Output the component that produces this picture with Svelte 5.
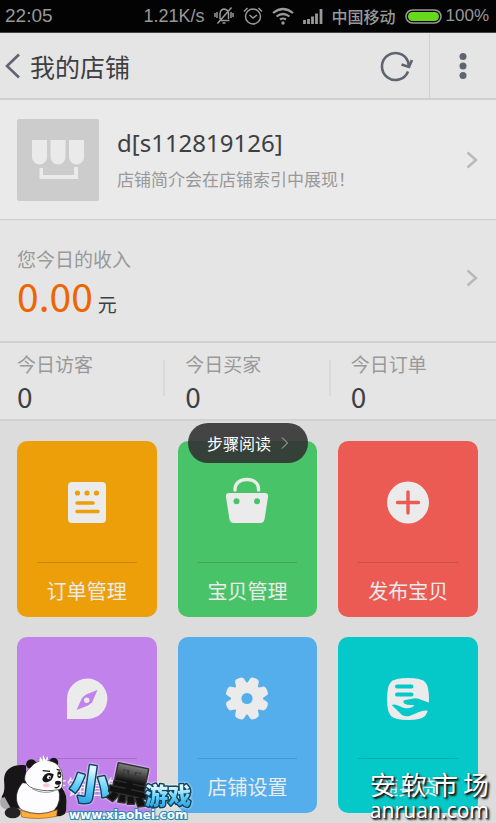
<script lang="ts">
	type Tile = {
		icon: string;
		label: string;
	};

	const stats = [
		{ label: '今日访客', value: 0 },
		{ label: '今日买家', value: 0 },
		{ label: '今日订单', value: 0 }
	];

	const tiles: Tile[] = [
		{ icon: 'orders', label: '订单管理' },
		{ icon: 'goods', label: '宝贝管理' },
		{ icon: 'publish', label: '发布宝贝' },
		{ icon: 'explore', label: '店铺营销' },
		{ icon: 'settings', label: '店铺设置' },
		{ icon: 'loan', label: '随身贷' }
	];

	const teeth = [22.5, 67.5, 112.5, 157.5, 202.5, 247.5, 292.5, 337.5];
	const market = ['安', '软', '市', '场'];
</script>

{#snippet chevron()}
	<svg class="chevron" viewBox="0 0 12 18" aria-hidden="true">
		<path d="M1.5 1.5 10 9l-8.500 7.500" />
	</svg>
{/snippet}

<div class="page">
	<div class="status">
		<span class="time">22:05</span>
		<span class="rate">1.21K/s</span>
		<svg width="20" height="18" viewBox="0 0 20 18" aria-hidden="true">
			<path d="M5 13.500h10.500M6 12V6.500Q6.500 2.500 10 2q4 .5 4.500 4.500V12M8.500 16h3M3.500 16.500 17.500.5M1 6v4M3 5v6M17 5v6M19 6v4" />
		</svg>
		<svg width="20" height="18" viewBox="0 0 20 18" aria-hidden="true">
			<circle cx="10" cy="9.500" r="7.500" />
			<path d="m6.500 8 3.500 3 4-3M1 4.500 4.500 1M19 4.500 15.500 1" />
		</svg>
		<svg class="wifi" width="22" height="18" viewBox="0 0 22 18" aria-hidden="true">
			<path d="M1 6q10-8 20 0M4.500 9.500q6.500-5 13 0M8 12.500q3-2 6 0" />
			<circle class="solid" cx="11" cy="16" r="1.700" />
		</svg>
		<svg width="20" height="18" viewBox="0 0 20 18" aria-hidden="true">
			<path class="bars" d="M1.500 17v-4M5.500 17v-5M9.500 17V9.500M13.500 17V6.500M18 17V2" />
		</svg>
		<span class="carrier">中国移动</span>
		<span class="power">
			<svg width="37" height="15" viewBox="0 0 37 15" aria-hidden="true">
				<rect x="1" y="1" width="35" height="13" rx="6.500" />
				<rect class="charge" x="3" y="3" width="31" height="9" rx="4.500" />
			</svg>
			<span>100%</span>
		</span>
	</div>

	<header class="header">
		<button class="back" type="button" aria-label="返回">
			<svg width="16" height="28" viewBox="0 0 16 28" aria-hidden="true">
				<path d="M14 2.500 2 14l12 11.500" />
			</svg>
		</button>
		<h1>我的店铺</h1>
		<button class="action" type="button" aria-label="刷新">
			<svg width="32" height="30" viewBox="0 0 32 30" aria-hidden="true">
				<path d="M28 20.500A13.500 13.500 0 1 1 28 10.500L29 16M21.500 13.500l7.500 2.500 3-7" />
			</svg>
		</button>
		<button class="action menu" type="button" aria-label="更多">
			<svg width="8" height="28" viewBox="0 0 8 28" aria-hidden="true">
				<circle cx="4" cy="4.500" r="3.500" />
				<circle cx="4" cy="14" r="3.500" />
				<circle cx="4" cy="23.500" r="3.500" />
			</svg>
		</button>
	</header>

	<main>
		<section class="shop">
			<svg class="avatar" viewBox="0 0 82 82" aria-hidden="true">
				<path d="M15 21h15v17a7.500 7.500 0 0 1-15 0zM33.500 21h15v17a7.500 7.500 0 0 1-15 0zM52 21h15v17a7.500 7.500 0 0 1-15 0z" />
				<path d="M22.500 49H26v7h31v-8h4v12H22.500z" />
			</svg>
			<div class="shop-info">
				<h2>d[s112819126]</h2>
				<p>店铺简介会在店铺索引中展现！</p>
			</div>
			{@render chevron()}
		</section>

		<section class="income">
			<div class="income-info">
				<p class="caption">您今日的收入</p>
				<p class="amount"><strong>0.00</strong><span>元</span></p>
			</div>
			{@render chevron()}
		</section>

		<dl class="stats">
			{#each stats as stat (stat.label)}
				<div class="stat">
					<dt>{stat.label}</dt>
					<dd>{stat.value}</dd>
				</div>
			{/each}
		</dl>

		<section class="board">
			<button class="steps" type="button">
				<span>步骤阅读</span>
				<svg width="8" height="12" viewBox="0 0 8 12" aria-hidden="true">
					<path d="m1 .5 5.500 5.500L1 11.500" />
				</svg>
			</button>

			{#each tiles as tile (tile.icon)}
				<button type="button" class={`tile ${tile.icon}`}>
					<span class="tile-icon">
						<svg width="42" height="42" viewBox="0 0 42 42" aria-hidden="true">
							{#if tile.icon === 'orders'}
								<rect x="2" y="1" width="38" height="41" rx="4" />
								<g class="cut">
									<circle cx="11.500" cy="12" r="2.600" />
									<circle cx="21" cy="12" r="2.600" />
									<circle cx="30.500" cy="12" r="2.600" />
								</g>
								<path class="cut-line" d="M11 22h16M11 30.500h21" />
							{:else if tile.icon === 'goods'}
								<path class="handle" d="M9 9C9 2 14-1.500 20.800-1.500S32.600 2 32.600 9" />
								<path d="M3 12h36q3.500 0 3 4l-3.300 21.500q-.7 4.500-4.700 4.500H8q-4 0-4.700-4.500L0 16q-.5-4 3-4z" />
								<g class="cut">
									<circle cx="10.500" cy="20.300" r="3" />
									<circle cx="31" cy="20.300" r="3" />
								</g>
							{:else if tile.icon === 'publish'}
								<circle cx="21" cy="21.500" r="21" />
								<path class="cut-line" d="M10.500 21.500h21M21 11v21" />
							{:else if tile.icon === 'explore'}
								<path d="M1 42V22a20.200 20.200 0 1 1 20.500 20z" />
								<path class="cut" d="M31.500 13 26 25.500l-4 3L10.500 33 16 21l4-3.500z" />
								<circle cx="20.700" cy="23.300" r="2.700" />
							{:else if tile.icon === 'settings'}
								<g transform="translate(21 21.500)">
									<circle r="16" />
									{#each teeth as angle (angle)}
										<path transform={`rotate(${angle})`} d="M-6-13-4.600-20Q-4-21.800 0-21.800T4.600-20L6-13z" />
									{/each}
									<circle class="cut" r="5.600" />
								</g>
							{:else}
								<path d="M21 1q13 0 17 4t4 17-4 17-17 4-17-4T0 22 4 5t17-4z" />
								<path class="cut-line thick" d="M10 9.500h14.500M10 17.500h14.500" />
								<path class="cut" d="M4.700 28q2-1.200 5 0l6 2.500q3 1.200 6 .7 5-1 5.500-3.200-7 .5-10-1.500-2.300-2.500 1-3.500l8.500-1.500q4-.6 8 1.500l8.300 3v8q-6-1.500-11 1l-9.500 4q-4 1-7.500-1z" />
							{/if}
						</svg>
					</span>
					<span class="tile-label">{tile.label}</span>
				</button>
			{/each}
		</section>
	</main>

	<svg class="panda-mark" width="200" height="73" viewBox="0 0 200 73" role="img" aria-label="小黑游戏 www.xiaohei.com">
		<defs>
			<linearGradient id="sky" x1="0" y1="0" x2="0" y2="1">
				<stop offset="0.3" stop-color="#d9f6ff" />
				<stop offset="0.6" stop-color="#5ccdf6" />
				<stop offset="0.9" stop-color="#2b9fe0" />
			</linearGradient>
			<linearGradient id="ink" x1="0" y1="0" x2="0" y2="1">
				<stop offset="0.2" stop-color="#8a8a8a" />
				<stop offset="0.5" stop-color="#111" />
			</linearGradient>
		</defs>
		<g class="panda" transform="scale(.3333)">
			<path fill="#171517" d="M78 46C40 40 12 56 12 90c2 24 2 36-6 48-8 16 6 38 22 38l50-10z" />
			<path fill="#aaa" d="M3 142q8 4 14-4l10 8 10-4 8 14-10 22q-26 4-34-12-3-12 2-24z" />
			<path fill="#171517" d="m10 134 12 6 6-8 8 10 10-6 14 40-28-2z" />
			<ellipse cx="38" cy="188" rx="24" ry="17" fill="#242225" />
			<path fill="#171517" d="M160 104q30 0 38 34 4 28-5 50-8 14-28 10l-7-28z" />
			<path class="white" d="M68 98c-28 30-22 72 2 84q48 18 92 0 26-28 12-70z" />
			<path fill="#ffae39" stroke="#8e501b" stroke-width="2" d="M61 180q54 24 111-1l-2 20q-54 12-105 2z" />
			<path fill="#171517" d="M172 112q14 24 12 46l-10 24q-4 18 14 14 12-4 11-26 2-52-27-58z" />
			<ellipse cx="94" cy="43" rx="16" ry="15" fill="#171517" />
			<ellipse cx="161" cy="38" rx="14" ry="15" fill="#171517" />
			<path class="white" d="M94 50c18-26 70-24 84 1q13 16 9 44 3 19-10 24-38 6-62 0-32-4-41-29-2-25 20-40z" />
			<path fill="#fdfcff" d="m118 38 2-18 8 12 1-17 7 16 7-12-1 20z" />
			<path fill="#171517" d="M127 86q6-18 24-17l10 4q-2 20-20 24-14 0-14-11z" />
			<ellipse cx="178" cy="74" rx="6" ry="10" fill="#171517" />
			<circle cx="147" cy="82" r="6" fill="#fff" />
			<circle cx="149" cy="83" r="3" fill="#222" />
			<circle cx="178" cy="76" r="3" fill="#fff" />
			<path fill="none" stroke="#171517" stroke-width="4" d="m128 62 22 2M170 58l11 3M164 112q10 4 14-6" />
			<ellipse cx="174" cy="98" rx="9" ry="6" fill="#171517" />
			<ellipse cx="139" cy="106" rx="10" ry="6" fill="#ffc3cb" />
			<path fill="none" stroke="#999" stroke-width="3" d="M97 117q34 17 66 6" />
		</g>
		<g class="mark-text">
			<text class="sky large" x="70" y="50" transform="rotate(8 90 35)">小</text>
			<text class="ink large" x="109" y="50" transform="rotate(12 130 35)">黑</text>
			<text class="sky small" x="145" y="54">游戏</text>
		</g>
		<text class="site" x="69" y="69">www.xiaohei.com</text>
	</svg>

	<div class="market-mark">
		<div class="market-name">
			{#each market as char (char)}
				<span>{char}</span>
			{/each}
		</div>
		<div class="market-site">anruan.com</div>
	</div>
</div>

<style>
	:global(body) {
		margin: 0;
		background: #dcdcdc;
	}

	.page {
		position: relative;
		overflow: hidden;
		min-height: 100vh;
		font-family: 'Noto Sans', 'Noto Sans CJK SC', sans-serif;
		color: #3d4043;
	}

	button {
		margin: 0;
		padding: 0;
		border: 0;
		background: none;
		font: inherit;
		color: inherit;
		cursor: pointer;
	}

	h1,
	h2,
	p,
	dl,
	dd {
		margin: 0;
		font-weight: 400;
	}

	svg {
		display: block;
		flex: none;
		overflow: visible;
	}

	.status {
		display: flex;
		align-items: center;
		gap: 9px;
		height: 32px;
		padding: 0 7px 0 5px;
		border-bottom: 1px solid #444;
		background: #030303;
		color: #999;
		font-family: 'Liberation Sans', 'Noto Sans CJK SC', sans-serif;
		font-size: 17px;
	}

	.status svg {
		fill: none;
		stroke: #999;
		stroke-width: 1.5;
	}

	.status .wifi {
		stroke-width: 2.2;
	}

	.status .solid {
		fill: #999;
		stroke: none;
	}

	.status .bars {
		stroke-width: 2.8;
	}

	.status .charge {
		fill: #67d91c;
		stroke: none;
	}

	.time {
		margin-right: auto;
		font-size: 19px;
	}

	.rate {
		font-size: 18px;
	}

	.carrier {
		font-size: 16px;
		font-weight: 500;
	}

	.power {
		display: flex;
		align-items: center;
		gap: 4px;
	}

	.header {
		display: flex;
		align-items: center;
		height: 65px;
		border-bottom: 2px solid #cfcfcf;
		background: #e5e5e5;
	}

	.header svg {
		fill: none;
		stroke: #5f6570;
		stroke-width: 2.6;
	}

	.back {
		padding: 0 9px 0 5px;
	}

	.header h1 {
		flex: 1;
		padding-top: 2px;
		font-size: 25px;
		line-height: 36px;
	}

	.action {
		display: grid;
		place-items: center;
		width: 67px;
		height: 100%;
	}

	.menu {
		border-left: 1px solid #cfcfcf;
	}

	.header .menu svg {
		fill: #5f6570;
		stroke: none;
	}

	.shop {
		display: flex;
		align-items: center;
		gap: 18px;
		padding: 19px 18px 18px 17px;
		border-bottom: 1px solid #cccccc;
		background: #eaeaea;
	}

	.avatar {
		width: 82px;
		height: 82px;
		border-radius: 2px;
		background: #cccccc;
		fill: #eaeaea;
	}

	.shop-info,
	.income-info {
		flex: 1;
		min-width: 0;
	}

	.shop-info h2 {
		font-size: 24px;
		line-height: 40px;
	}

	.shop-info p {
		color: #999;
		font-size: 17px;
		line-height: 34px;
	}

	.chevron {
		width: 12px;
		height: 18px;
		fill: none;
		stroke: #b8b8b8;
		stroke-width: 2.4;
	}

	.income {
		display: flex;
		align-items: center;
		padding: 22px 18px 27px 17px;
		border-bottom: 2px solid #d0d0d0;
		background: #e5e5e5;
	}

	.caption,
	.stat dt {
		color: #999;
		font-size: 19px;
		line-height: 36px;
	}

	.amount {
		display: flex;
		align-items: baseline;
		gap: 5px;
		font-family: 'Noto Sans CJK SC', sans-serif;
		line-height: 34px;
	}

	.amount strong {
		color: #ee6500;
		font-size: 39px;
		font-weight: 400;
	}

	.amount span {
		font-size: 19px;
		line-height: 20px;
	}

	.stats {
		display: grid;
		grid-template-columns: repeat(3, 1fr);
		padding: 4px 0 10px;
		border-bottom: 2px solid #d2d2d2;
		background: #e5e5e5;
	}

	.stat {
		padding-left: 20px;
		background: linear-gradient(#dadada, #dadada) right center / 2px 36px no-repeat;
	}

	.stat:first-child {
		padding-left: 17px;
	}

	.stat:last-child {
		background: none;
	}

	.stat dd {
		font-family: 'Noto Sans CJK SC', sans-serif;
		font-size: 28px;
		line-height: 26px;
	}

	.board {
		position: relative;
		display: grid;
		grid-template-columns: repeat(3, minmax(0, 1fr));
		gap: 20px 21px;
		padding: 20px 18px 10px 17px;
		background: #dcdcdc;
	}

	/* sits across the top edge of the middle tile */
	.steps {
		position: absolute;
		top: 2px;
		left: 50%;
		z-index: 1;
		display: flex;
		align-items: center;
		justify-content: center;
		gap: 10px;
		width: 120px;
		height: 40px;
		border-radius: 20px;
		background: rgb(51 51 51 / 90%);
		color: #fff;
		font-size: 16px;
		transform: translateX(-50%);
	}

	.steps svg {
		fill: none;
		stroke: #bbb;
	}

	.tile {
		--tile: #ec9f08;
		display: flex;
		flex-direction: column;
		align-items: stretch;
		padding: 0 20px;
		border-radius: 10px;
		background: var(--tile);
		color: #ebebeb;
	}

	.goods {
		--tile: #48c367;
	}

	.publish {
		--tile: #eb5b53;
	}

	.explore {
		--tile: #c182eb;
	}

	.settings {
		--tile: #54aeeb;
	}

	.loan {
		--tile: #05c8c8;
	}

	.tile-icon {
		display: grid;
		place-items: center;
		height: 121px;
		border-bottom: 1px solid rgb(0 0 0 / 14%);
	}

	.tile-icon svg {
		fill: #ebebeb;
	}

	.tile-icon .cut {
		fill: var(--tile);
	}

	.tile-icon .cut-line {
		fill: none;
		stroke: var(--tile);
		stroke-width: 3.4;
		stroke-linecap: round;
	}

	.tile-icon .thick {
		stroke-width: 4;
	}

	.tile-icon .handle {
		fill: none;
		stroke: #ebebeb;
		stroke-width: 3.4;
		stroke-linecap: round;
	}

	.tile-label {
		padding-top: 4px;
		font-size: 20px;
		line-height: 50px;
		white-space: nowrap;
	}

	.panda-mark {
		position: absolute;
		bottom: 0;
		left: 0;
	}

	.panda,
	.mark-text {
		filter: drop-shadow(0 0 1px #fff);
	}

	.white {
		fill: #fdfcff;
		stroke: #242225;
		stroke-width: 2;
	}

	.mark-text {
		font-family: 'Noto Sans CJK SC', sans-serif;
		font-weight: 900;
		stroke: #12445f;
		stroke-width: 3;
		stroke-linejoin: round;
		paint-order: stroke;
	}

	.large {
		font-size: 41px;
	}

	.small {
		font-size: 23px;
	}

	.sky {
		fill: url(#sky);
	}

	.ink {
		fill: url(#ink);
		stroke: #333;
	}

	.site {
		fill: #fff;
		stroke: #2489b4;
		stroke-width: 2;
		paint-order: stroke;
		font-family: 'DejaVu Sans', sans-serif;
		font-size: 12px;
		font-weight: 700;
	}

	.market-mark {
		position: absolute;
		right: 7px;
		bottom: 0;
		color: #fff;
		text-shadow: 1px 1px 2px #000, 2px 2px 2px #333;
	}

	.market-name {
		display: flex;
		justify-content: space-between;
		font-size: 26px;
		line-height: 26px;
	}

	.market-site {
		font-size: 21px;
		line-height: 25px;
	}
</style>
